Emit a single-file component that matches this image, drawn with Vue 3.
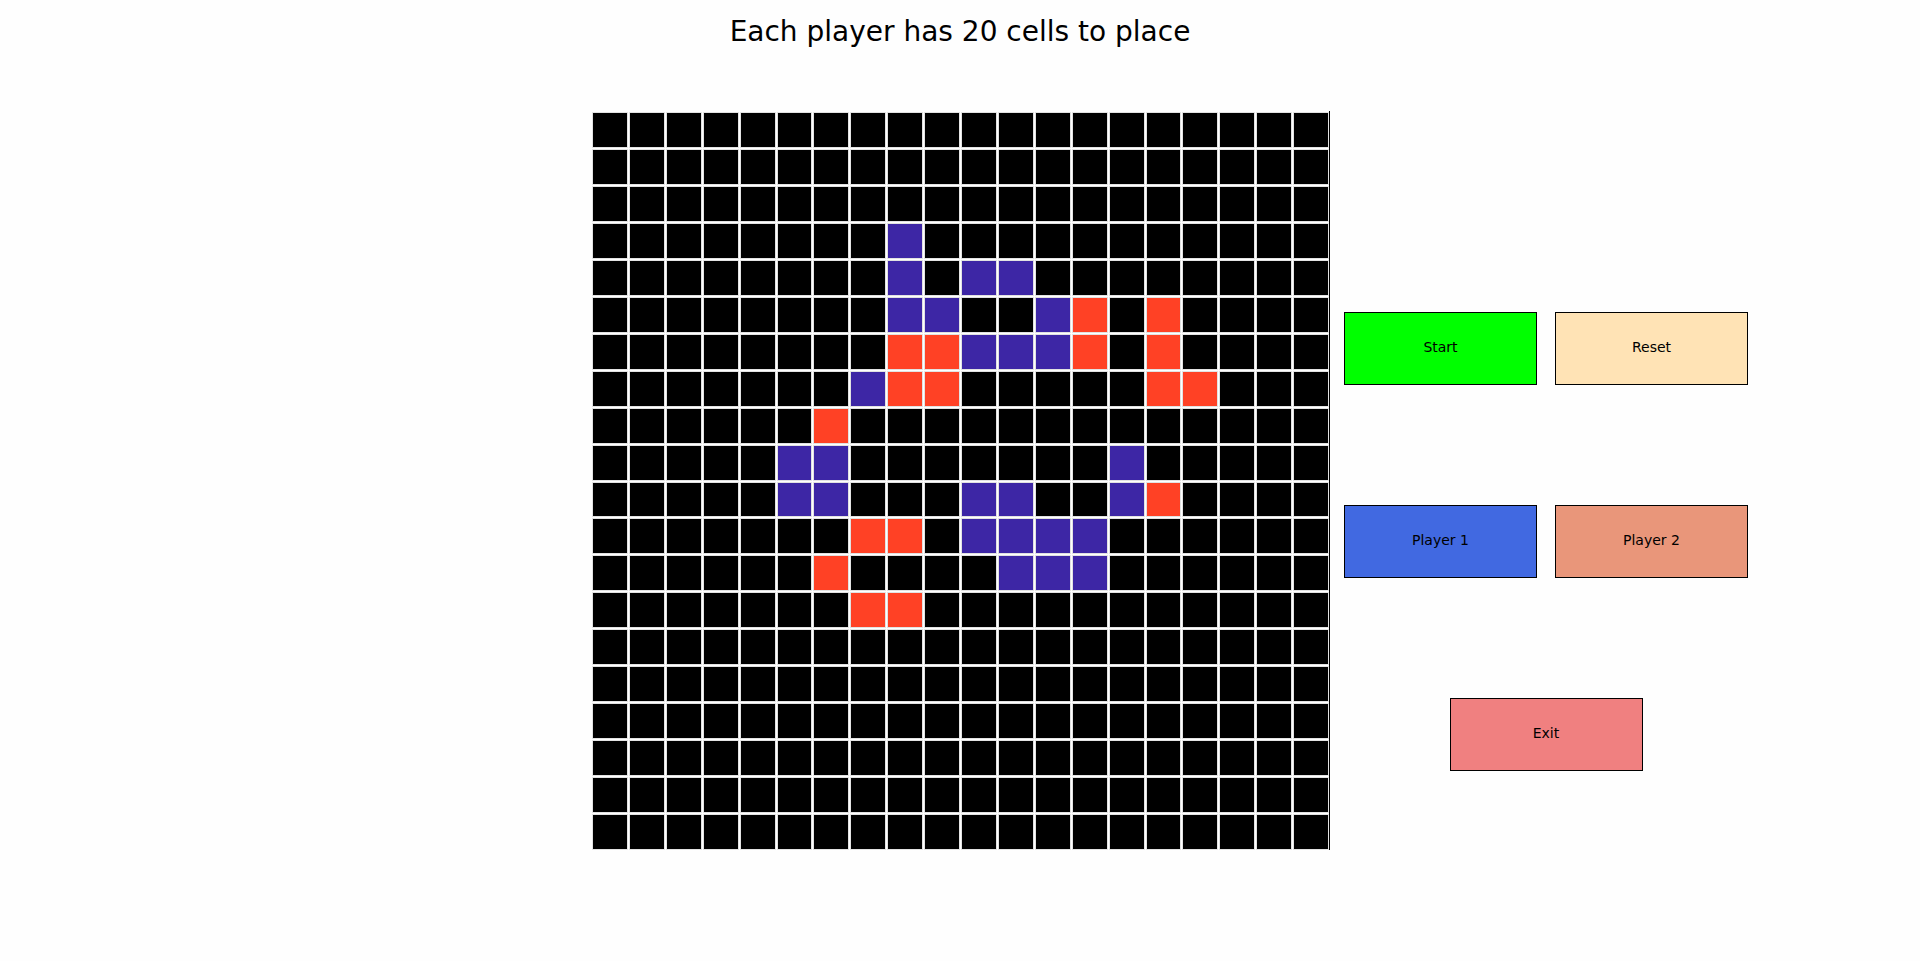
<script setup>
import { ref } from 'vue'

const LAYOUT = [
  '....................',
  '....................',
  '....................',
  '........B...........',
  '........B.BB........',
  '........BB..BR.R....',
  '........RRBBBR.R....',
  '.......BRR.....RR...',
  '......R.............',
  '.....BB.......B.....',
  '.....BB...BB..BR....',
  '.......RR.BBBB......',
  '......R....BBB......',
  '.......RR...........',
  '....................',
  '....................',
  '....................',
  '....................',
  '....................',
  '....................',
]

const parse = () => LAYOUT.join('').split('')
const cells = ref(parse())
const player = ref('B')

function place(i) {
  cells.value[i] = cells.value[i] === player.value ? '.' : player.value
}
function reset() {
  cells.value = parse()
}
function label(i) {
  return `Row ${Math.floor(i / 20) + 1}, column ${(i % 20) + 1}`
}
</script>

<template>
  <div class="page">
    <h1 class="title">Each player has 20 cells to place</h1>
    <main class="game">
      <section class="board-frame" aria-label="Board">
        <div class="board">
          <button
            v-for="(cell, i) in cells"
            :key="i"
            type="button"
            class="cell"
            :class="{ blue: cell === 'B', red: cell === 'R' }"
            :aria-label="label(i)"
            @click="place(i)"
          ></button>
        </div>
      </section>
      <section class="controls" aria-label="Controls">
        <div class="row">
          <button type="button" class="btn start">Start</button>
          <button type="button" class="btn reset" @click="reset">Reset</button>
        </div>
        <div class="row">
          <button type="button" class="btn player1" @click="player = 'B'">Player 1</button>
          <button type="button" class="btn player2" @click="player = 'R'">Player 2</button>
        </div>
        <div class="row single">
          <button type="button" class="btn exit">Exit</button>
        </div>
      </section>
    </main>
  </div>
</template>

<style>
body {
  margin: 0;
  background: #fefefe;
}
</style>

<style scoped>
.page {
  min-height: 100vh;
  box-sizing: border-box;
  padding-top: 15px;
  font-family: "DejaVu Sans", sans-serif;
  color: #000;
}
.title {
  margin: 0;
  font-size: 28px;
  line-height: 34px;
  font-weight: 400;
  text-align: center;
}
.game {
  display: grid;
  grid-template-columns: 593fr 737fr 14fr 404fr 172fr;
  align-items: start;
  margin-top: 62px;
}
.board-frame {
  grid-column: 2;
  padding: 2px 1px 1px 0;
  border-right: 1px solid #000;
}
.board {
  display: grid;
  grid-template-columns: repeat(20, minmax(0, 1fr));
  grid-template-rows: repeat(20, minmax(0, 1fr));
  gap: 3px;
  aspect-ratio: 735 / 736;
}
.cell {
  appearance: none;
  margin: 0;
  padding: 0;
  border: 0;
  border-radius: 0;
  background: #000;
  box-shadow: 0 0 0 1px #e2e2e2;
}
.cell.blue {
  background: #3d26a5;
}
.cell.red {
  background: #ff4125;
}
.controls {
  grid-column: 4;
  display: flex;
  flex-direction: column;
  gap: 120px;
  margin-top: 201px;
}
.row {
  display: flex;
  gap: 18px;
}
.row.single {
  justify-content: center;
}
.btn {
  appearance: none;
  flex: 1;
  height: 73px;
  margin: 0;
  padding: 0 0 3px;
  border: 1px solid #000;
  border-radius: 0;
  font-family: inherit;
  font-size: 14px;
  line-height: 18px;
  color: #000;
}
.single .btn {
  flex: none;
  width: calc((100% - 18px) / 2);
}
.start {
  background: #00ff00;
}
.reset {
  background: #ffe3b5;
}
.player1 {
  background: #4169e1;
}
.player2 {
  background: #e9967a;
}
.exit {
  background: #f08080;
}
</style>
